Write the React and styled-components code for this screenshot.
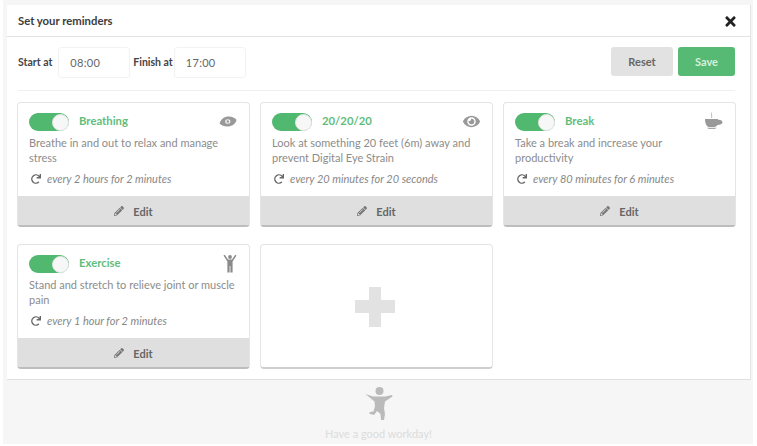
import React from 'react';
import styled, { createGlobalStyle } from 'styled-components';
import { FaTimes, FaEye, FaRedo, FaPencilAlt } from 'react-icons/fa';

const GlobalStyle = createGlobalStyle`
  html, body {
    margin: 0;
    padding: 0;
    background: #fff;
    font-family: 'Lato', 'Liberation Sans', sans-serif;
  }
`;

const BreathIcon = () => (
  <svg width="18" height="13" viewBox="0 0 18 13">
    <path fill="#999" d="M0.5 8.5 C2 4 5 1.5 10 1.5 C13 1.5 16 3 17.5 5 C16.5 9 13 11.5 8 11.5 C5 11.5 2.5 10.5 0.5 8.5 Z" />
    <ellipse cx="8.8" cy="6.5" rx="2.6" ry="2.3" fill="#f2f2f2" />
    <circle cx="8.8" cy="6.5" r="1.2" fill="#999" />
  </svg>
);

const CupIcon = () => (
  <svg width="19" height="18" viewBox="0 0 19 18">
    <path fill="none" stroke="#bbb" strokeWidth="1" d="M7.5 0.5 C6.5 2 8.5 3.5 7.5 6" />
    <path fill="#999" d="M1 7 H14 V8 C16 7.5 18.5 8.5 18.5 10.2 C18.5 12 16 13 13.5 13 C12.7 14.2 11.5 15 10 15 H5 C2.5 15 1 11 1 7 Z" />
    <path fill="#a8a8a8" d="M3 15.8 H12.5 L11 17 H4.5 Z" />
  </svg>
);

const StretchIcon = () => (
  <svg width="14" height="19" viewBox="0 0 14 19">
    <circle cx="7" cy="3" r="1.9" fill="#8a8a8a" />
    <path fill="#8a8a8a" d="M0.5 1.5 L1.8 0.8 L5 5.4 H9 L12.2 0.8 L13.5 1.5 L9.6 7.5 V18.5 H7.4 V12 H6.6 V18.5 H4.4 V7.5 Z" />
  </svg>
);

const JumpIcon = () => (
  <svg width="28" height="35" viewBox="0 0 28 35">
    <circle cx="14.5" cy="5" r="4" fill="#bababa" />
    <path fill="#bababa" d="M0.5 8 L8 10.5 H20 L27 9 L27.5 10.5 L20 15.5 L19 22 L20 28 L19 34 L16 34 L15.5 28 L12 25 L9 29 L4 27.5 L5 26 L8.5 25.5 L10 20 L9.5 15.5 Z" />
  </svg>
);

const reminders = [
  { title: 'Breathing', text: 'Breathe in and out to relax and manage stress', every: 'every 2 hours for 2 minutes', icon: <BreathIcon /> },
  { title: '20/20/20', text: 'Look at something 20 feet (6m) away and prevent Digital Eye Strain', every: 'every 20 minutes for 20 seconds', icon: <FaEye size={17} color="#999" /> },
  { title: 'Break', text: 'Take a break and increase your productivity', every: 'every 80 minutes for 6 minutes', icon: <CupIcon /> },
  { title: 'Exercise', text: 'Stand and stretch to relieve joint or muscle pain', every: 'every 1 hour for 2 minutes', icon: <StretchIcon /> },
];

const ReminderCard = ({ item }) => (
  <Card>
    <CardBody>
      <CardHead>
        <Toggle><Knob /></Toggle>
        <CardTitle>{item.title}</CardTitle>
        <CardIcon>{item.icon}</CardIcon>
      </CardHead>
      <Description>{item.text}</Description>
      <Schedule>
        <FaRedo size={10} color="#666" />
        <span>{item.every}</span>
      </Schedule>
    </CardBody>
    <EditBar>
      <FaPencilAlt size={10} color="#777" />
      <span>Edit</span>
    </EditBar>
  </Card>
);

export default function App() {
  return (
    <>
      <GlobalStyle />
      <Page>
        <Modal>
          <Header>
            <Title>Set your reminders</Title>
            <CloseIcon><FaTimes size={15} color="#222" /></CloseIcon>
          </Header>
          <Content>
            <Controls>
              <TimeLabel gap={6}>Start at</TimeLabel>
              <TimeInput readOnly value="08:00" />
              <TimeLabel gap={1}>Finish at</TimeLabel>
              <TimeInput readOnly value="17:00" />
              <Actions>
                <ActionButton>Reset</ActionButton>
                <ActionButton primary>Save</ActionButton>
              </Actions>
            </Controls>
            <Grid>
              {reminders.map((item) => <ReminderCard key={item.title} item={item} />)}
              <AddCard>
                <Plus />
              </AddCard>
            </Grid>
          </Content>
        </Modal>
        <Footer>
          <JumpIcon />
          <FooterText>Have a good workday!</FooterText>
        </Footer>
      </Page>
    </>
  );
}

const Page = styled.div`
  width: 750px;
  height: 444px;
  margin-left: 3px;
  padding-top: 5px;
  box-sizing: border-box;
  background: #f6f6f6;
  display: flex;
  flex-direction: column;
`;
const Modal = styled.div`
  width: 744px;
  height: 375px;
  margin-left: 4px;
  box-sizing: border-box;
  background: #fff;
  border-right: 1px solid #e4e4e4;
  border-bottom: 1px solid #e0e0e0;
`;
const Header = styled.div`
  height: 32px;
  box-sizing: border-box;
  padding: 0 12px 0 11px;
  display: flex;
  align-items: center;
  justify-content: space-between;
  border-bottom: 1px solid #e2e2e2;
`;
const Title = styled.div`
  font-size: 11.3px;
  font-weight: 700;
  color: #3c3c3c;
`;
const CloseIcon = styled.div`
  display: flex;
  margin-top: 2px;
`;
const Content = styled.div`
  padding: 10px 14px 0 10px;
`;
const Controls = styled.div`
  height: 44px;
  box-sizing: border-box;
  display: flex;
  align-items: flex-start;
  border-bottom: 1px solid #f0f0f0;
  margin: 0 1px;
`;
const TimeLabel = styled.label`
  font-size: 10.5px;
  font-weight: 700;
  color: #444;
  line-height: 30px;
  margin-right: ${(p) => p.gap}px;
  white-space: nowrap;
`;
const TimeInput = styled.input`
  width: 72px;
  height: 31px;
  box-sizing: border-box;
  margin: 0 3px 0 0;
  padding: 0 11px;
  border: 1px solid #f2f2f2;
  border-radius: 3px;
  outline: none;
  font-family: inherit;
  font-size: 11px;
  letter-spacing: 0.3px;
  color: #666;
  background: #fff;
`;
const Actions = styled.div`
  margin-left: auto;
  display: flex;
  gap: 5px;
`;
const ActionButton = styled.button`
  width: ${(p) => (p.primary ? '57px' : '62px')};
  height: 29px;
  border: none;
  border-radius: 3px;
  padding: 0;
  font-family: inherit;
  font-size: 11px;
  font-weight: 700;
  color: ${(p) => (p.primary ? '#d8f0df' : '#666')};
  background: ${(p) => (p.primary ? '#56b974' : '#e2e2e2')};
`;
const Grid = styled.div`
  display: grid;
  grid-template-columns: repeat(3, 233px);
  grid-auto-rows: 125px;
  column-gap: 10px;
  row-gap: 17px;
  margin-top: 11px;
`;
const Card = styled.div`
  box-sizing: border-box;
  display: flex;
  flex-direction: column;
  background: #fff;
  border: 1px solid #e4e4e4;
  border-bottom: 2px solid #bdbdbd;
  border-radius: 4px;
  overflow: hidden;
`;
const CardBody = styled.div`
  flex: 1;
  padding: 10px 11px 0;
`;
const CardHead = styled.div`
  display: flex;
  align-items: center;
  height: 18px;
`;
const Toggle = styled.div`
  width: 40px;
  height: 18px;
  box-sizing: border-box;
  border-radius: 9px;
  background: #50b86f;
  display: flex;
  justify-content: flex-end;
`;
const Knob = styled.div`
  width: 17px;
  height: 17px;
  box-sizing: border-box;
  margin-top: 0.5px;
  border-radius: 50%;
  background: #f7f7f7;
  border: 1px solid #e4e4e4;
`;
const CardTitle = styled.div`
  margin: -4px 0 0 10px;
  font-size: 11.3px;
  font-weight: 700;
  color: #62bd7d;
`;
const CardIcon = styled.div`
  margin: -2px 1px 0 auto;
  display: flex;
  align-items: center;
  justify-content: center;
`;
const Description = styled.div`
  margin-top: 4px;
  max-width: 207px;
  font-size: 11px;
  line-height: 15px;
  color: #8c8c8c;
`;
const Schedule = styled.div`
  display: flex;
  align-items: center;
  gap: 6px;
  margin-top: 6px;
  padding-left: 2px;
  font-size: 11px;
  line-height: 15px;
  font-style: italic;
  color: #888;
`;
const EditBar = styled.div`
  height: 29px;
  box-sizing: border-box;
  padding-top: 1px;
  flex-shrink: 0;
  display: flex;
  align-items: center;
  justify-content: center;
  gap: 9px;
  background: #dfdfdf;
  font-size: 11px;
  font-weight: 700;
  color: #666;
`;
const AddCard = styled.div`
  box-sizing: border-box;
  display: flex;
  align-items: center;
  justify-content: center;
  background: #fff;
  border: 1px solid #e4e4e4;
  border-bottom: 2px solid #cfcfcf;
  border-radius: 4px;
`;
const Plus = styled.div`
  position: relative;
  width: 40px;
  height: 13px;
  margin-right: 3px;
  background: #e2e2e2;
  &::after {
    content: '';
    position: absolute;
    left: 14px;
    top: -13px;
    width: 12px;
    height: 40px;
    background: #e2e2e2;
  }
`;
const Footer = styled.div`
  flex: 1;
  display: flex;
  flex-direction: column;
  align-items: center;
  padding-top: 6px;
  margin-left: 1px;
`;
const FooterText = styled.div`
  margin-top: 6px;
  font-size: 11px;
  color: #dcdcdc;
`;
